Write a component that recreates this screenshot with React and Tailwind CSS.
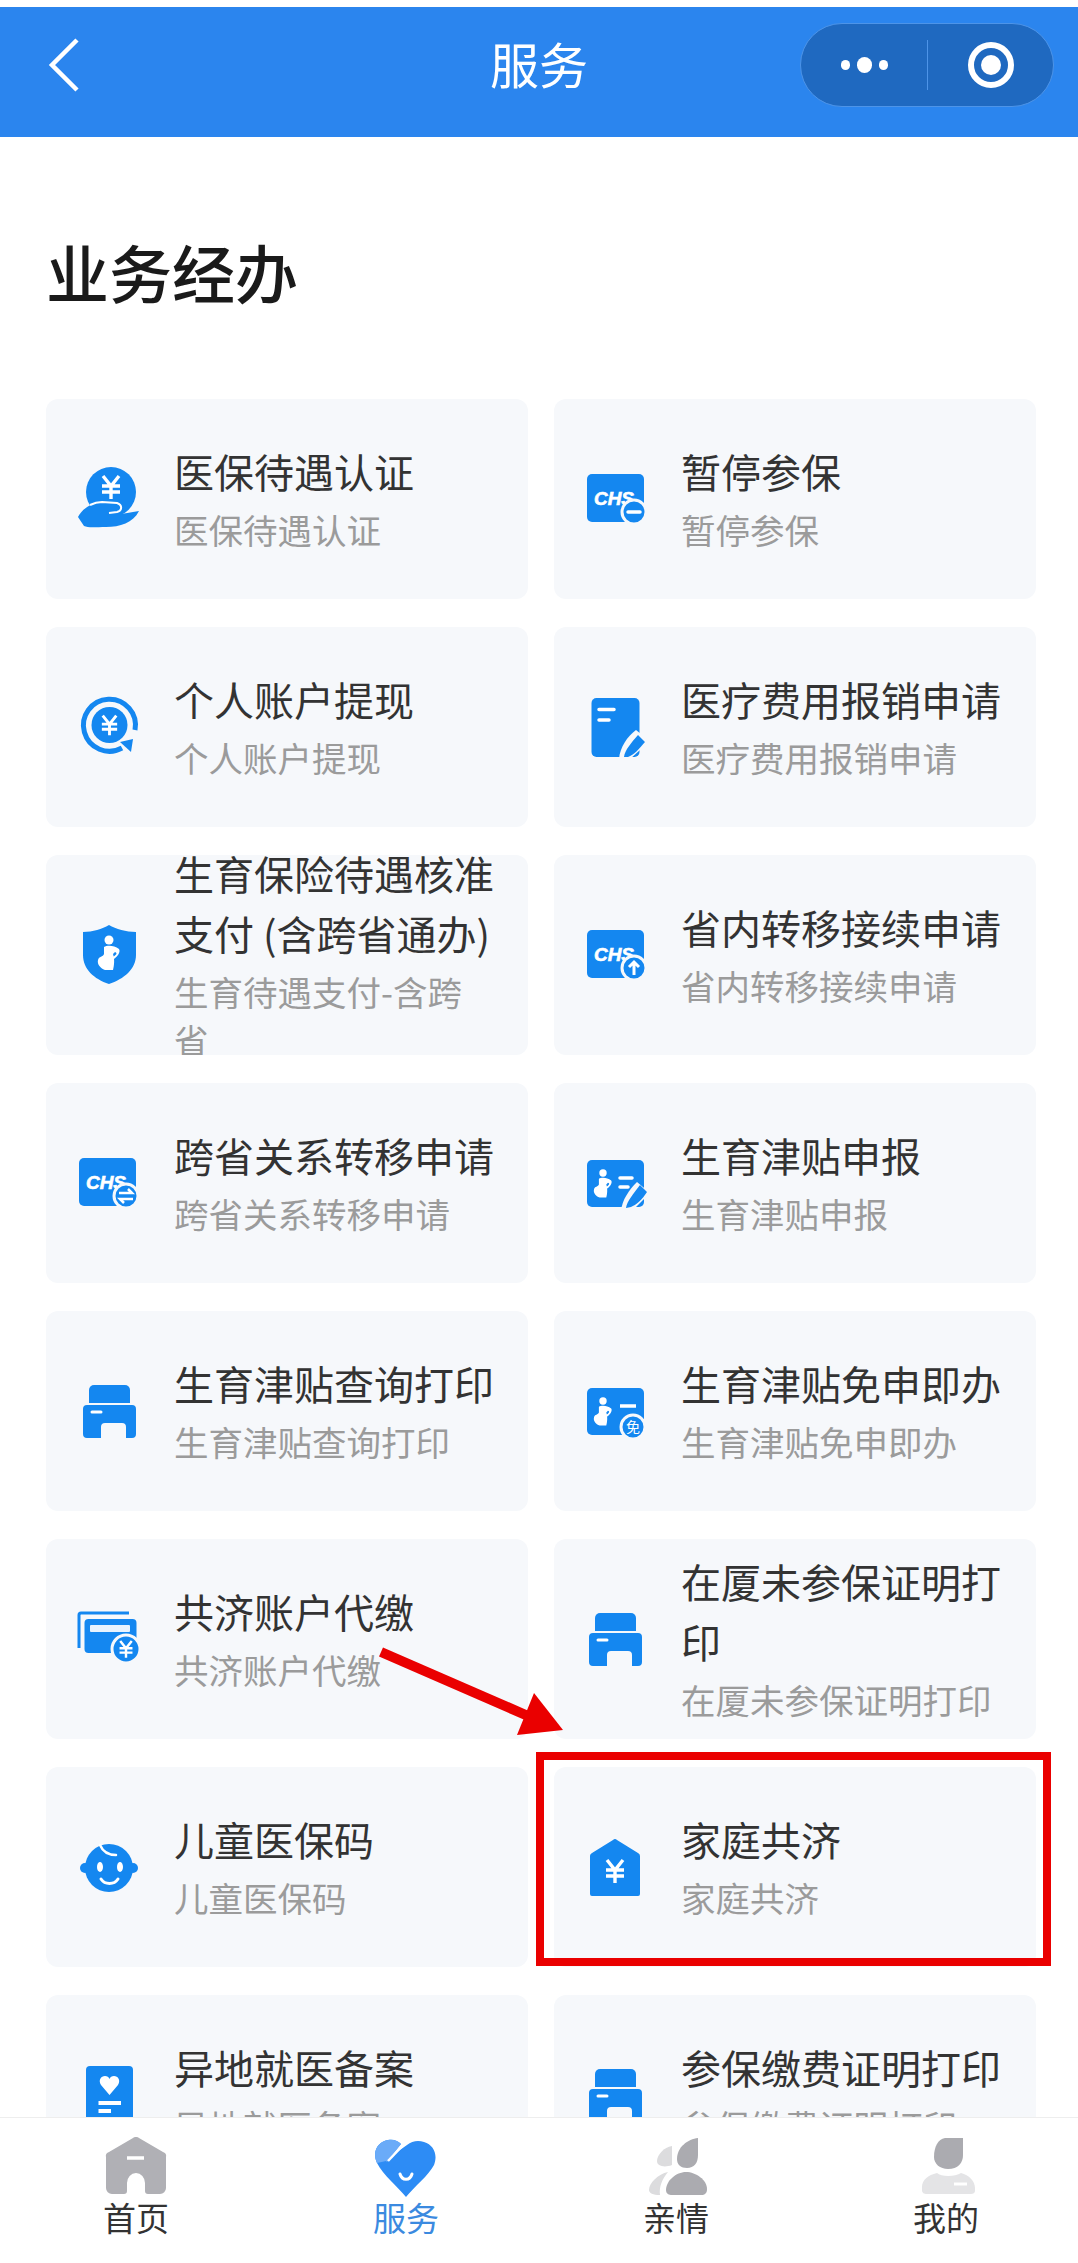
import React from "react";

const B = "#1487f0";

const Yen = ({ x, y, s = 1, c = "#fff" }) => (
  <path
    transform={`translate(${x} ${y}) scale(${s})`}
    d="M-8 -11 L0 -1 L8 -11 M-9 -1 H9 M-9 5 H9 M0 -1 V12"
    fill="none"
    stroke={c}
    strokeWidth="3.4"
  />
);

const Box = ({ children }) => (
  <svg width="64" height="64" viewBox="0 0 64 64" className="shrink-0">
    {children}
  </svg>
);

const Hand = () => (
  <Box>
    <circle cx="35" cy="25" r="25" fill={B} />
    <Yen x={35} y={20} s={1} />
    <path d="M2 50 C7 41 15 36 26 36 L41 37 C46 38 46 43 41 44 L33 45 C40 49 50 46 63 44 C57 56 44 60 30 60 C20 60 12 61 8 59 Z" fill={B} />
    <path d="M14 38 C18 36 22 35 26 35 L41 36 C47 38 46 44 41 45 L33 46" fill="none" stroke="#fff" strokeWidth="2" />
  </Box>
);

const Cycle = () => (
  <Box>
    <path d="M59 35 A26 26 0 1 0 46 53" fill="none" stroke={B} strokeWidth="5" />
    <circle cx="33.5" cy="30" r="18" fill={B} />
    <Yen x={33.5} y={30} s={0.85} />
    <path d="M30 50 C36 52 42 51 48 47" fill="none" stroke="#f6f8fb" strokeWidth="1" />
    <polygon points="44,47 57,44 55,57" fill={B} />
  </Box>
);

const Figure = ({ x = 0, y = 0, s = 1 }) => (
  <g transform={`translate(${x} ${y}) scale(${s})`} fill="#fff">
    <circle cx="0" cy="0" r="4.5" />
    <path d="M-5 7 C-2 5 5 5 10 9 C12 12 8 17 5 19 L4 17 C7 15 9 13 6 12 L4 14 C6 20 5 26 4 30 H-4 C-9 28 -12 24 -11 20 C-10 16 -6 17 -5 14 Z" />
  </g>
);

const Shield = () => (
  <Box>
    <path d="M33 2 C40 6 50 9 60 9 V32 C60 46 48 56 33 61 C18 56 7 46 7 32 V9 C17 9 26 6 33 2 Z" fill={B} />
    <Figure x={33} y={17} />
  </Box>
);

const Note = () => (
  <Box>
    <rect x="7.5" y="3" width="48" height="59" rx="5" fill={B} />
    <path d="M15 14.5 H30 M15 25 H25" stroke="#fff" strokeWidth="3.5" strokeLinecap="round" />
    <path d="M35 64 C36 52 43 42 52 35 L66 46 L46 64 Z" fill="#f6f8fb" />
    <path d="M40 62 C41 55 47 48 54 40 L61 47 C55 54 50 60 44 62 Z" fill={B} />
  </Box>
);

const Chs = ({ kind }) => (
  <Box>
    <rect x="3" y="7" width="57" height="48" rx="5" fill={B} />
    <text x="10" y="38" fill="#fff" stroke="#fff" strokeWidth="0.6" fontSize="18" fontWeight="700" fontStyle="italic" fontFamily="'Liberation Sans',sans-serif" textLength="40" lengthAdjust="spacingAndGlyphs">CHS</text>
    <circle cx="50" cy="45" r="12" fill={B} stroke="#f6f8fb" strokeWidth="3" />
    {kind === "minus" && <path d="M44 45 H56" stroke="#fff" strokeWidth="3.5" strokeLinecap="round" />}
    {kind === "up" && <path d="M50 52 V40 M45 44 L50 39 L55 44" fill="none" stroke="#fff" strokeWidth="3" />}
    {kind === "swap" && <path d="M43 42 H56 L52 38 M57 48 H44 L48 52" fill="none" stroke="#fff" strokeWidth="2.5" />}
  </Box>
);

const Maternity = () => (
  <Box>
    <rect x="3" y="9" width="57" height="47" rx="5" fill={B} />
    <Figure x={19} y={22} s={0.82} />
    <path d="M36 27 H48 M36 36 H44" stroke="#fff" strokeWidth="3.5" strokeLinecap="round" />
    <path d="M37 60 C38 49 45 39 53 31 L66 42 L46 62 Z" fill="#f6f8fb" />
    <path d="M42 57 C43 50 50 42 56 34 L63 41 C58 49 52 54 47 56 Z" fill={B} />
  </Box>
);

const Waiver = () => (
  <Box>
    <rect x="3" y="9" width="57" height="47" rx="5" fill={B} />
    <Figure x={19} y={22} s={0.82} />
    <path d="M36 27 H52" stroke="#fff" strokeWidth="3.5" />
    <circle cx="49" cy="48" r="12" fill={B} stroke="#f6f8fb" strokeWidth="3" />
    <text x="49" y="53" textAnchor="middle" fill="#fff" fontSize="14">免</text>
  </Box>
);

const Printer = ({ dx = 0 }) => (
  <svg width="64" height="64" viewBox={`${-dx} -1 64 64`} className="shrink-0">
    <path d="M13 10 a5 5 0 0 1 5 -5 H49 a5 5 0 0 1 5 5 V23 H13 Z" fill={B} />
    <path d="M7 29 a4 4 0 0 1 4 -4 H56 a4 4 0 0 1 4 4 V54 a4 4 0 0 1 -4 4 H50 V47 a4 4 0 0 0 -4 -4 H29 a4 4 0 0 0 -4 4 V58 H11 a4 4 0 0 1 -4 -4 Z" fill={B} />
    <path d="M16 32 H25" stroke="#fff" strokeWidth="3" strokeLinecap="round" />
  </svg>
);

const Wallet = () => (
  <Box>
    <path d="M3 41 V8 Q3 6 5 6 H53" fill="none" stroke={B} strokeWidth="3" />
    <rect x="8.5" y="12" width="52" height="34" rx="4" fill={B} />
    <rect x="14" y="18" width="40" height="7" rx="1" fill="#fff" opacity="0.9" />
    <circle cx="50" cy="42" r="14" fill={B} stroke="#f6f8fb" strokeWidth="3" />
    <Yen x={50} y={42} s={0.72} />
  </Box>
);

const Baby = () => (
  <Box>
    <circle cx="9" cy="33" r="5" fill={B} />
    <circle cx="57" cy="33" r="5" fill={B} />
    <circle cx="33" cy="33" r="24" fill={B} />
    <path d="M24 10 C27 17 32 20 40 20" fill="none" stroke="#fff" strokeWidth="2.5" strokeLinecap="round" />
    <ellipse cx="24" cy="32" rx="3" ry="5" fill="#fff" />
    <ellipse cx="44" cy="32" rx="3" ry="5" fill="#fff" />
    <path d="M25 44 C29 50 38 50 42 44" fill="none" stroke="#fff" strokeWidth="3" strokeLinecap="round" />
  </Box>
);

const HouseYen = () => (
  <Box>
    <path d="M29 5 Q31 3 33 5 L54 18 Q56 19 56 21 V59 a2 2 0 0 1 -2 2 H8 a2 2 0 0 1 -2 -2 V21 Q6 19 8 18 Z" fill={B} />
    <Yen x={31} y={36} s={1} />
  </Box>
);

const DocHeart = () => (
  <Box>
    <rect x="10" y="3" width="47" height="58" rx="4" fill={B} />
    <path d="M33.5 32 L25 22 C22 17 25 13 29 13 C31 13 33 14 33.5 16 C34 14 36 13 38 13 C42 13 45 17 42 22 Z" fill="#fff" />
    <path d="M22.5 40 H45 M22.5 48 H35" stroke="#fff" strokeWidth="4" />
  </Box>
);

const rows = [
  [{ i: <Hand />, t: "医保待遇认证", s: "医保待遇认证" }, { i: <Chs kind="minus" />, t: "暂停参保", s: "暂停参保" }],
  [{ i: <Cycle />, t: "个人账户提现", s: "个人账户提现" }, { i: <Note />, t: "医疗费用报销申请", s: "医疗费用报销申请" }],
  [{ i: <Shield />, t: "生育保险待遇核准支付 (含跨省通办)", s: "生育待遇支付-含跨省" }, { i: <Chs kind="up" />, t: "省内转移接续申请", s: "省内转移接续申请" }],
  [{ i: <Chs kind="swap" />, t: "跨省关系转移申请", s: "跨省关系转移申请" }, { i: <Maternity />, t: "生育津贴申报", s: "生育津贴申报" }],
  [{ i: <Printer />, t: "生育津贴查询打印", s: "生育津贴查询打印" }, { i: <Waiver />, t: "生育津贴免申即办", s: "生育津贴免申即办" }],
  [{ i: <Wallet />, t: "共济账户代缴", s: "共济账户代缴" }, { i: <Printer dx={-2} />, t: "在厦未参保证明打印", s: "在厦未参保证明打印" }],
  [{ i: <Baby />, t: "儿童医保码", s: "儿童医保码" }, { i: <HouseYen />, t: "家庭共济", s: "家庭共济" }],
  [{ i: <DocHeart />, t: "异地就医备案", s: "异地就医备案" }, { i: <Printer dx={-2} />, t: "参保缴费证明打印", s: "参保缴费证明打印" }],
];

const Card = ({ i, t, s }) => (
  <div className="flex h-[200px] items-center gap-[34px] overflow-hidden rounded-xl bg-[#f6f8fb] pl-[30px] even:gap-[33px]">
    {i}
    <div className="flex w-[322px] shrink-0 flex-col gap-1 pb-[5px]">
      <div className="text-[40px] leading-[60px] text-[#333333]">{t}</div>
      <div className="max-w-[314px] text-[34.5px] leading-[48px] text-[#9b9b9b]">{s}</div>
    </div>
  </div>
);

const Tab = ({ icon, label, active }) => (
  <div className="flex w-[120px] flex-col items-center">
    {icon}
    <div className={`text-[33px] leading-[40px] ${active ? "text-[#3b8ae0]" : "text-[#333333]"}`}>{label}</div>
  </div>
);

const TabSvg = ({ children }) => (
  <svg width="64" height="60" viewBox="0 0 64 60">
    {children}
  </svg>
);

export default function App() {
  return (
    <div className="relative flex h-[2263px] w-[1078px] flex-col overflow-hidden bg-white pt-[7px] font-['Noto_Sans_CJK_SC','Noto_Sans',sans-serif]">
      <header className="relative flex h-[130px] shrink-0 items-center justify-center bg-[#2b85ee] text-[49px] text-white">
        <svg className="absolute left-[46px] top-[31px]" width="36" height="56" viewBox="0 0 36 56">
          <path d="M31 2 L6 27 L31 52" fill="none" stroke="#fff" strokeWidth="4.5" />
        </svg>
        <span className="pb-[19px] leading-[60px]">服务</span>
        <div className="absolute left-[800px] top-[16px] flex h-[84px] w-[254px] items-center rounded-full border border-[#4d94e8] bg-[#1f69c0]">
          <div className="flex h-[50px] w-[127px] items-center justify-center gap-[7px] border-r border-[#4d94e8]">
            <span className="h-[10px] w-[9px] rounded-full bg-white" />
            <span className="h-[16px] w-[15px] rounded-full bg-white" />
            <span className="h-[10px] w-[9px] rounded-full bg-white" />
          </div>
          <div className="flex flex-1 items-center justify-center">
            <div className="flex h-[46px] w-[46px] items-center justify-center rounded-full border-[6px] border-white">
              <span className="h-[20px] w-[20px] rounded-full bg-white" />
            </div>
          </div>
        </div>
      </header>

      <main className="min-h-0 flex-1 overflow-hidden pl-[46px] pr-[42px]">
        <h1 className="mb-[92px] pt-[98px] text-[63px] font-medium leading-[72px] text-[#1a1a1a]">业务经办</h1>
        <div className="grid grid-cols-2 gap-x-[26px] gap-y-[28px]">
          {rows.flat().map((c) => (
            <Card key={c.t} {...c} />
          ))}
        </div>
      </main>

      <nav className="flex h-[146px] shrink-0 justify-between border-t border-[#eeeeee] bg-white pl-[76px] pr-[72px] pt-[19px]">
        <Tab
          label="首页"
          icon={
            <TabSvg>
              <path d="M32 0 a4 4 0 0 1 3 1 L59 15 a4 4 0 0 1 3 5 V51 a6 6 0 0 1 -6 6 H44 a3 3 0 0 1 -3 -3 V46 a9 10 0 0 0 -18 0 V54 a3 3 0 0 1 -3 3 H8 a6 6 0 0 1 -6 -6 V20 a4 4 0 0 1 3 -5 L29 1 a4 4 0 0 1 3 -1 Z" fill="#b0b0b5" />
              <path d="M23 21 H40" stroke="#fff" strokeWidth="3.5" />
            </TabSvg>
          }
        />
        <Tab
          active
          label="服务"
          icon={
            <TabSvg>
              <path d="M32 60 C24 50 9 38 3 26 C-3 13 6 4 14 3 C20 2 24 4 27 7 L16 20 L33 8 C38 4 44 3 50 5 C60 8 64 18 60 28 C55 38 40 50 32 60 Z" fill="#2d8cf5" />
              <path d="M3 26 C-3 13 6 4 14 3 C20 2 24 4 27 7 L14 24 C12 26 13 24 12 24 Z" fill="#6aabf8" />
              <path d="M14 24 L34 3" stroke="#fff" strokeWidth="2.5" />
              <path d="M26 37 C28 44 36 44 38 37" fill="none" stroke="#fff" strokeWidth="3" strokeLinecap="round" />
            </TabSvg>
          }
        />
        <Tab
          label="亲情"
          icon={
            <TabSvg>
              <path d="M28 9 C20 10 13 18 13 24 C13 29 20 31 28 28 Z" fill="#dcdcde" />
              <path d="M54 1 C44 2 33 10 33 22 C33 28 37 31 43 31 C50 31 54 26 54 18 Z" fill="#ababb0" />
              <path d="M24 35 C14 37 5 46 5 53 C5 56 9 58 16 58 C15 50 18 42 24 35 Z" fill="#dcdcde" />
              <path d="M42 35 C32 35 22 44 22 53 C22 57 25 58 28 58 H57 C61 58 63 56 63 52 C63 43 52 35 42 35 Z" fill="#ababb0" />
            </TabSvg>
          }
        />
        <Tab
          label="我的"
          icon={
            <TabSvg>
              <g transform="translate(3 0)">
                <path d="M46 1 H28 C21 2 17 10 17 20 C17 27 23 32 31 32 C41 32 46 26 46 18 Z" fill="#ababb0" />
                <path d="M20 36 C24 40 38 40 44 36 C52 38 58 44 58 51 V54 C58 56 56 57 54 57 H10 C7 57 5 56 5 53 V50 C5 43 11 38 20 36 Z" fill="#e4e4e6" />
                <path d="M37 47 H50" stroke="#fff" strokeWidth="3" />
              </g>
            </TabSvg>
          }
        />
      </nav>

      <div className="absolute left-[536px] top-[1752px] h-[214px] w-[515px] border-[8px] border-[#ea0000]" />
      <svg className="pointer-events-none absolute left-[370px] top-[1640px]" width="200" height="100" viewBox="370 1640 200 100">
        <path d="M381 1652 L528 1716" stroke="#ea0000" strokeWidth="10" />
        <polygon points="563,1730 534,1693 517,1735" fill="#ea0000" />
      </svg>
    </div>
  );
}
